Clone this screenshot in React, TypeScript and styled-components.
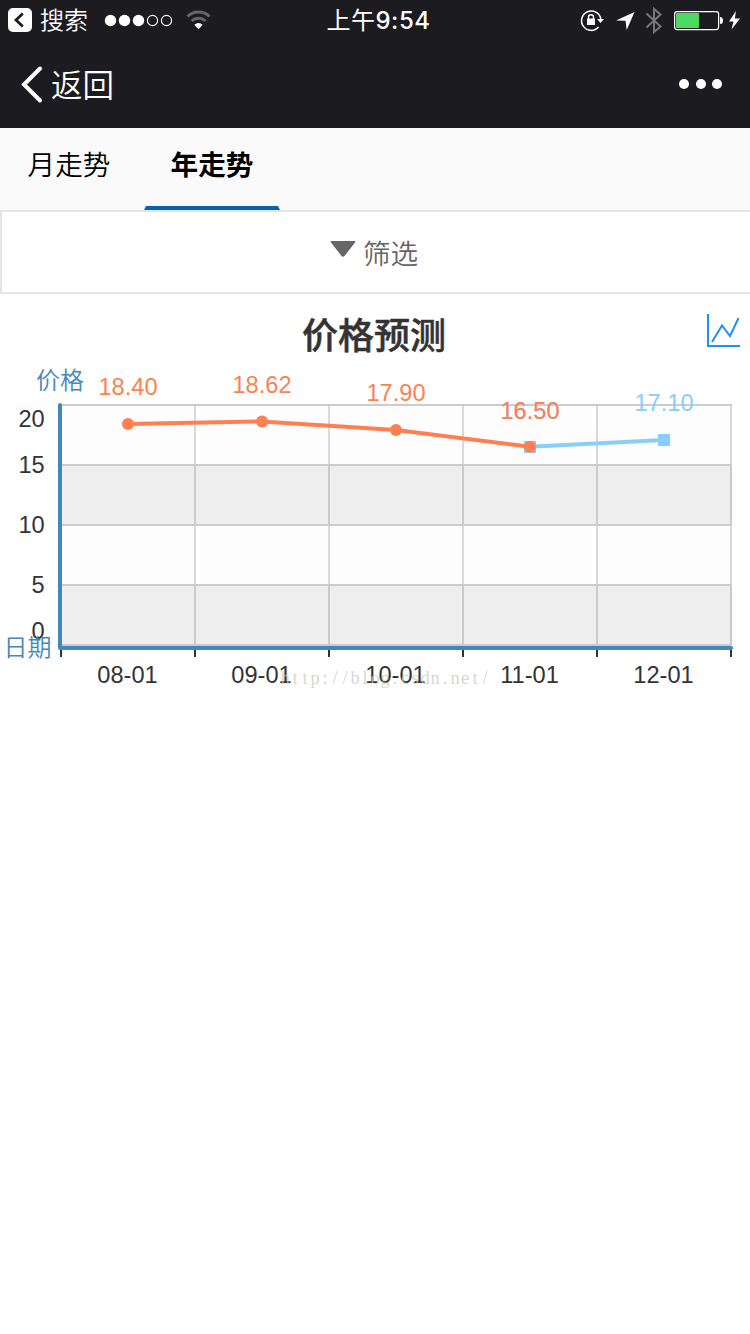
import React from "react";
import styled, { createGlobalStyle } from "styled-components";

const GlobalStyle = createGlobalStyle`
  * { box-sizing: border-box; }
  body {
    margin: 0;
    background: #fff;
    font-family: "Liberation Sans", "Noto Sans CJK SC", sans-serif;
  }
`;

const Page = styled.div`
  width: 750px;
  min-height: 1334px;
  display: flex;
  flex-direction: column;
  background: #fff;
`;

const TopBars = styled.header`
  height: 128px;
  background: #1c1b20;
  color: #fff;
`;

const StatusBar = styled.div`
  height: 40px;
  display: grid;
  grid-template-columns: 1fr auto 1fr;
  grid-template-rows: 40px;
  align-items: center;
  padding: 0 10px 0 8px;
`;

const StatusGroup = styled.div<{ $end?: boolean }>`
  display: flex;
  align-items: center;
  justify-content: ${(p) => (p.$end ? "flex-end" : "flex-start")};
`;

const BackApp = styled.span`
  font: 350 24px/38px "Noto Sans CJK SC", sans-serif;
  margin: 0 16px 2px 8px;
`;

const Clock = styled.time`
  font: 500 24px/38px "Inter", "Noto Sans CJK SC", sans-serif;
  letter-spacing: 0.5px;
  padding: 2px 0 0 9px;
`;

const ClockPeriod = styled.span`
  font-weight: 400;
`;

const NavBar = styled.nav`
  height: 88px;
  display: flex;
  align-items: center;
  justify-content: space-between;
  padding: 0 28px 0 20px;
`;

const BackButton = styled.div`
  display: flex;
  align-items: center;
  gap: 7px;
  font: 350 31.5px/46px "Noto Sans CJK SC", sans-serif;
`;

const BackLabel = styled.span`
  padding-bottom: 2px;
`;

const MoreDots = styled.div`
  display: flex;
  gap: 6.5px;
`;

const Dot = styled.i`
  width: 10px;
  height: 10px;
  border-radius: 50%;
  background: #fff;
`;

const Tabs = styled.div`
  height: 84px;
  display: flex;
  gap: 7px;
  padding-left: 1px;
  background: #fafafa;
  border-bottom: 2px solid #e5e5e5;
`;

const Tab = styled.div<{ $active?: boolean }>`
  width: 136px;
  height: 82px;
  border: 2px solid transparent;
  border-top: 0;
  border-bottom: 4px solid ${(p) => (p.$active ? "#0064b6" : "transparent")};
  font: ${(p) => (p.$active ? 700 : 350)} 27.6px/71px "Noto Sans CJK SC", sans-serif;
  text-align: center;
  color: #000;
`;

const FilterBar = styled.div`
  height: 82px;
  display: flex;
  justify-content: center;
  gap: 7px;
  padding-right: 4px;
  border-left: 2px solid #e5e5e5;
  border-bottom: 2px solid #e5e5e5;
  color: #666;
  font: 350 27.6px/80px "Noto Sans CJK SC", sans-serif;

  svg { margin-top: 29px; }
`;

const Chart = styled.svg`
  display: block;
  width: 750px;
  height: 406px;
`;

const Label = styled.text`
  font: 23.6px "Liberation Sans", sans-serif;
  text-anchor: middle;
`;

const TickLabel = styled(Label)<{ $end?: boolean }>`
  fill: #333;
  text-anchor: ${(p) => (p.$end ? "end" : "middle")};
`;

const AxisName = styled.text`
  font: 350 24px "Noto Sans CJK SC", sans-serif;
  fill: #4488bb;
`;

const ChartTitle = styled.text`
  font: 500 36px "Noto Sans CJK SC", sans-serif;
  fill: #333;
  stroke: #333;
  stroke-width: 0.5px;
  text-anchor: middle;
`;

const Watermark = styled.text`
  font: 18.5px "Liberation Serif", serif;
  fill: #c9c9c0;
  fill-opacity: 0.75;
  text-anchor: middle;
`;

const CORAL = "#ff7f50";
const SKY = "#87cefa";

const actual = [
  { x: 128, y: 424, label: "18.40", ly: 395 },
  { x: 262, y: 421.4, label: "18.62", ly: 393 },
  { x: 396, y: 430, label: "17.90", ly: 401 },
  { x: 530, y: 446.8, label: "16.50", ly: 419 },
];
const dates = ["08-01", "09-01", "10-01", "11-01", "12-01"];
const yTicks = [
  { text: "20", y: 427 },
  { text: "15", y: 473 },
  { text: "10", y: 533 },
  { text: "5", y: 593 },
  { text: "0", y: 639 },
];
const columns = [195, 329, 463, 597, 731];
const site = "http://blog.csdn.net/";

function PriceChart() {
  return (
    <Chart viewBox="0 294 750 406">
      <ChartTitle x="374" y="348.500">价格预测</ChartTitle>
      <g fill="none" stroke="#1e90ff" strokeWidth="2">
        <path d="M708 314V346H740" />
        <path d="M712 342L722 325.500L730 336L738.500 318" />
      </g>

      {columns.map((x) => (
        <path key={x} d={`M${x} 405V646`} stroke="#ccc" strokeWidth="2" />
      ))}
      {[405, 465, 525, 585].map((y, i) => (
        <rect key={y} x="60" y={y} width="672" height="60"
          fill={i % 2 ? "rgba(200,200,200,.3)" : "rgba(250,250,250,.3)"} />
      ))}
      {[405, 465, 525, 585, 645].map((y) => (
        <path key={y} d={`M60 ${y}H732`} stroke="#ccc" strokeWidth="2" />
      ))}
      {[61, ...columns].map((x) => (
        <path key={x} d={`M${x} 648V657`} stroke="#333" strokeWidth="2" />
      ))}
      <path d="M60 405V648H731" fill="none" stroke="#4488bb" strokeWidth="4" strokeLinecap="round" strokeLinejoin="round" />

      {yTicks.map((t) => (
        <TickLabel key={t.text} $end x="44.700" y={t.y}>{t.text}</TickLabel>
      ))}
      {dates.map((d, i) => (
        <TickLabel key={d} x={127.5 + i * 134} y="683">{d}</TickLabel>
      ))}
      <AxisName x="36" y="389">价格</AxisName>
      <AxisName x="3.500" y="656">日期</AxisName>

      <path d="M530 446.800L664 440" stroke={SKY} strokeWidth="4" />
      <rect x="524" y="441" width="12" height="12" fill={SKY} />
      <rect x="658" y="434" width="12" height="12" fill={SKY} />
      <Label x="530" y="419" fill={SKY}>16.50</Label>
      <Label x="664" y="411" fill={SKY}>17.10</Label>

      <polyline points={actual.map((p) => `${p.x},${p.y}`).join(" ")} fill="none" stroke={CORAL} strokeWidth="4" />
      {actual.map((p) => (
        <g key={p.x} fill={CORAL}>
          <circle cx={p.x} cy={p.y} r="6" />
          <Label x={p.x} y={p.ly}>{p.label}</Label>
        </g>
      ))}

      <Watermark x={site.split("").map((_, i) => 285 + i * 10).join(" ")} y="684">{site}</Watermark>
    </Chart>
  );
}

function StatusIcons() {
  return (
    <svg width="162" height="40" viewBox="578 0 162 40">
      <path d="M598.600 27A9.700 9.700 0 1 1 600.800 19" fill="none" stroke="#fff" strokeWidth="1.500" />
      <path d="M597 19H604L600.500 23Z" fill="#fff" />
      <rect x="587" y="18.500" width="8" height="6.500" rx="0.500" fill="#fff" />
      <path d="M588.500 19V17.200a2.500 2.500 0 0 1 5 0V19" fill="none" stroke="#fff" strokeWidth="1.400" />
      <path d="M634.500 12L616 20.500L625.500 20.700L626.700 30Z" fill="#fff" />
      <path d="M646.500 13.500L660.500 26.500L654 32V9L660.500 14.500L646.500 27.500" fill="none" stroke="#77767a" strokeWidth="2" />
      <rect x="674.600" y="11.600" width="44" height="18" rx="2.500" fill="none" stroke="#fff" strokeWidth="1.200" />
      <rect x="676" y="13" width="23" height="15" rx="1" fill="#4cd964" />
      <path d="M720 17a3 3.500 0 0 1 0 7Z" fill="#fff" />
      <path d="M736 11L729 21.500H733.500L731.500 29.500L740 18.500H734.800Z" fill="#fff" />
    </svg>
  );
}

export default function App() {
  return (
    <Page>
      <GlobalStyle />
      <TopBars>
        <StatusBar>
          <StatusGroup>
            <svg width="24" height="24" viewBox="0 0 24 24">
              <rect width="24" height="24" rx="5" fill="#fff" />
              <path d="M14.800 5.500L8 12L14.800 18.500" fill="none" stroke="#1c1b20" strokeWidth="2.800" />
            </svg>
            <BackApp>搜索</BackApp>
            <svg width="110" height="40" viewBox="104 0 110 40">
              {[110.5, 124.5, 138.5].map((x) => (
                <circle key={x} cx={x} cy="20.500" r="5.700" fill="#fff" />
              ))}
              {[152.5, 166.5].map((x) => (
                <circle key={x} cx={x} cy="20.500" r="5.100" fill="none" stroke="#fff" strokeWidth="1.100" />
              ))}
              <g fill="none" stroke="#66656a" strokeWidth="3">
                <path d="M187.500 16.500a16 16 0 0 1 22 0" />
                <path d="M191.500 21a10.500 10.500 0 0 1 14 0" />
              </g>
              <path d="M194.300 24.800a6.500 6.500 0 0 1 8.400 0L198.500 29.300Z" fill="#fff" />
            </svg>
          </StatusGroup>
          <Clock><ClockPeriod>上午</ClockPeriod>9:54</Clock>
          <StatusGroup $end>
            <StatusIcons />
          </StatusGroup>
        </StatusBar>
        <NavBar>
          <BackButton>
            <svg width="24" height="38" viewBox="0 0 24 38">
              <path d="M20 3.500L4 19.500L20 35.500" fill="none" stroke="#fff" strokeWidth="4" strokeLinecap="round" />
            </svg>
            <BackLabel>返回</BackLabel>
          </BackButton>
          <MoreDots>
            <Dot /><Dot /><Dot />
          </MoreDots>
        </NavBar>
      </TopBars>
      <Tabs>
        <Tab>月走势</Tab>
        <Tab $active>年走势</Tab>
      </Tabs>
      <FilterBar>
        <svg width="26" height="17" viewBox="0 0 26 17">
          <path d="M1.500 0H24.500Q26 0 25 1.500L14.500 15Q13 16.500 11.500 15L1 1.500Q0 0 1.500 0Z" fill="#666" />
        </svg>
        筛选
      </FilterBar>
      <PriceChart />
    </Page>
  );
}
